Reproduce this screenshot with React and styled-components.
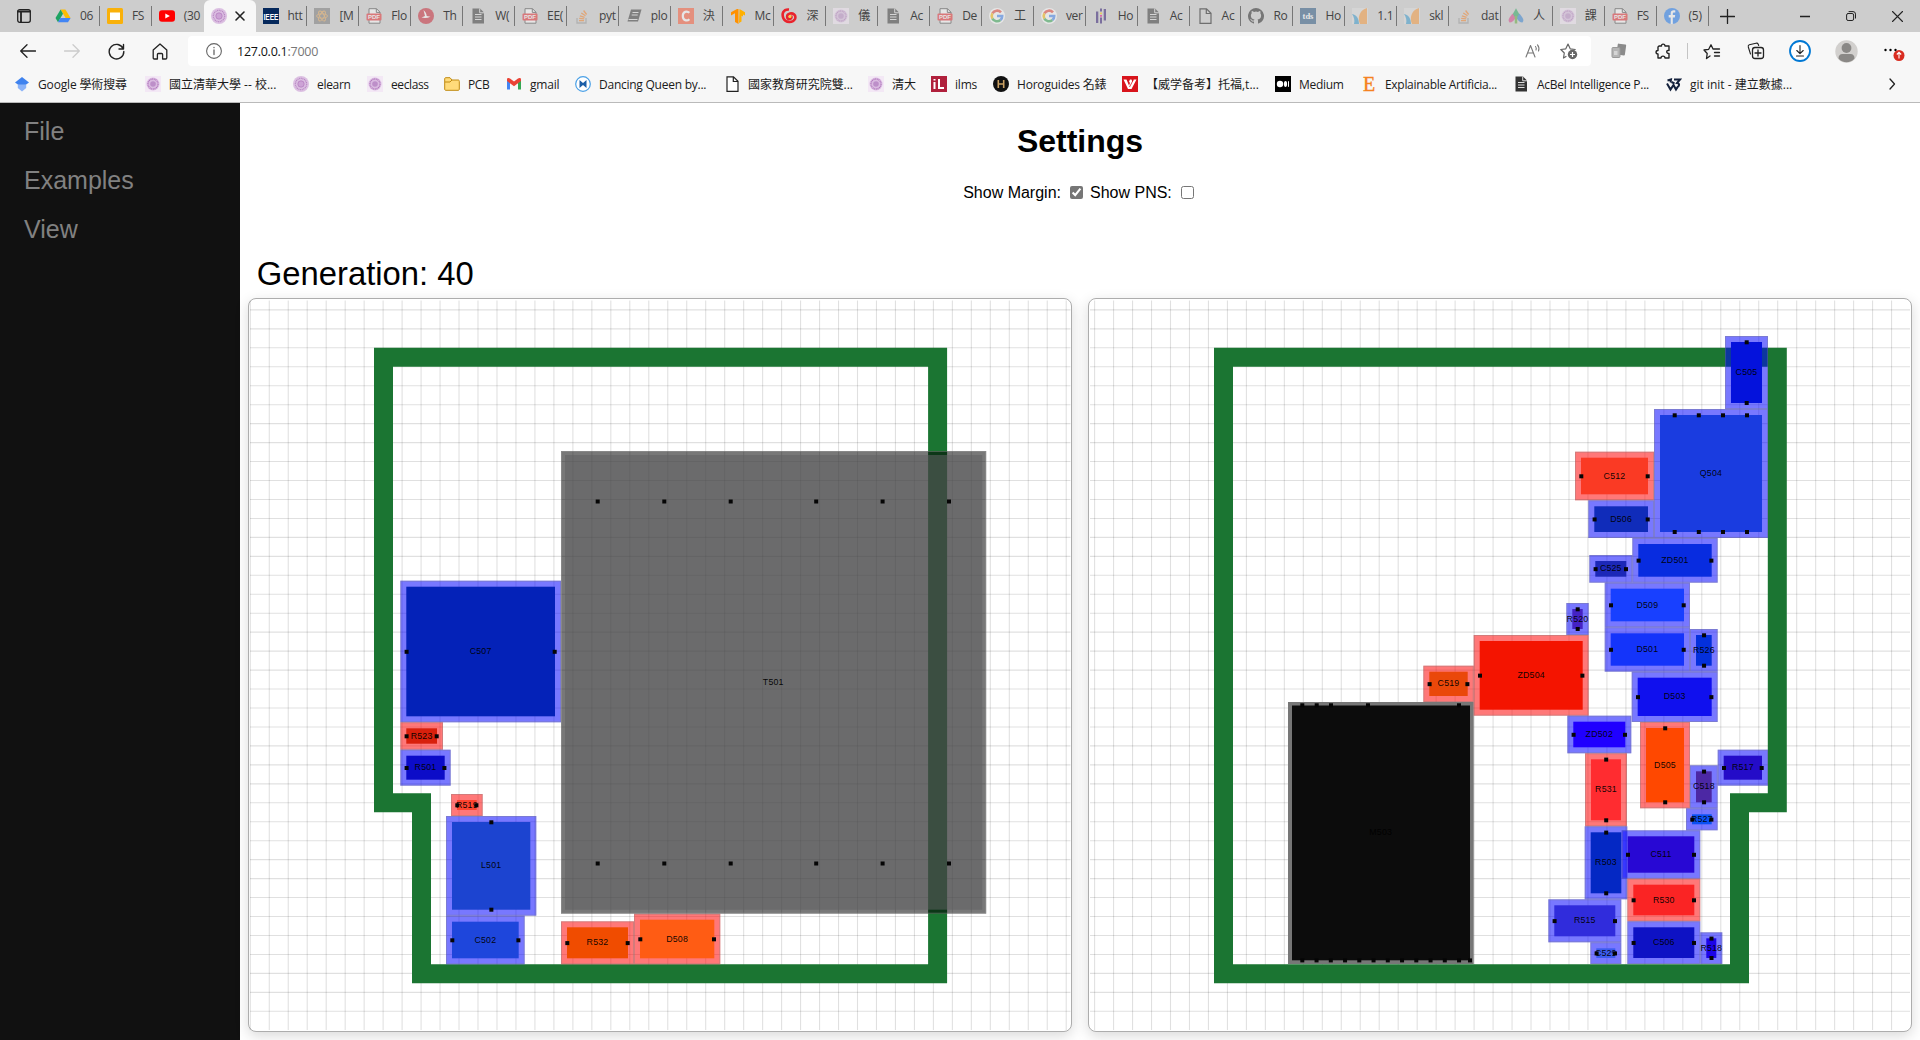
import React from "react";
import styled, { createGlobalStyle } from "styled-components";

const Global = createGlobalStyle`
  * { box-sizing: border-box; }
  body { margin: 0; background: #fff; font-family: "Liberation Sans", Arial, sans-serif; overflow: hidden; }
`;
const ui = `"Open Sans", "Noto Sans CJK TC", "Noto Sans", sans-serif`;

const Window = styled.div`
  width: 1920px;
  height: 1040px;
  display: flex;
  flex-direction: column;
  overflow: hidden;
`;
const TabStrip = styled.div`
  height: 32px;
  flex: none;
  display: flex;
  background: #cdcdcd;
  font-family: ${ui};
`;
const TabMenu = styled.div`
  width: 48px;
  display: flex;
  align-items: center;
  justify-content: center;
`;
const Tab = styled.div`
  width: 51.9px;
  height: 32px;
  flex: none;
  display: flex;
  align-items: center;
  padding-left: 7px;
  gap: ${(p) => (p.$active ? 5 : 9)}px;
  color: #444;
  font-size: 12px;
  white-space: nowrap;
  background: ${(p) =>
    p.$active ? "#f7f7f7" : p.$noLine ? "none" : "linear-gradient(#777, #777) right 6px / 1px 20px no-repeat"};
  border-radius: ${(p) => (p.$active ? "6px 6px 0 0" : "0")};
`;
const TabTitle = styled.span`
  letter-spacing: -0.3px;
  line-height: 20px;
`;
const Dim = styled.span`
  display: flex;
  opacity: ${(p) => (p.$dim ? 0.5 : 1)};
`;
const NewTab = styled.div`
  width: 38px;
  display: flex;
  align-items: center;
  justify-content: center;
`;
const Controls = styled.div`
  margin-left: auto;
  display: flex;
`;
const Control = styled.div`
  width: 46px;
  display: flex;
  align-items: center;
  justify-content: center;
`;
const Toolbar = styled.div`
  height: 38px;
  flex: none;
  display: flex;
  align-items: center;
  background: #f7f7f7;
  font-family: ${ui};
`;
const NavButton = styled.div`
  width: ${(p) => p.$w || 44}px;
  height: 30px;
  flex: none;
  display: flex;
  align-items: center;
  justify-content: center;
`;
const NavGroup = styled.div`
  width: 188px;
  padding-left: 6px;
  display: flex;
`;
const Address = styled.div`
  width: 1403px;
  height: 30px;
  padding: 0 4px 0 17px;
  display: flex;
  align-items: center;
  background: #fff;
  border-radius: 4px;
  font-size: 12.5px;
  letter-spacing: -0.25px;
`;
const Url = styled.span`
  margin-left: 14px;
  flex: 1;
  color: #111;
`;
const Port = styled.span`
  color: #777;
`;
const Divider = styled.div`
  width: 1px;
  height: 16px;
  background: #c4c4c4;
`;
const Bookmarks = styled.div`
  height: 33px;
  flex: none;
  padding: 0 0 4px 14px;
  display: flex;
  align-items: center;
  background: #f7f7f7;
  border-bottom: 1px solid #bababa;
  font-family: ${ui};
  font-size: 12px;
  color: #1b1b1b;
`;
const Bookmark = styled.div`
  width: ${(p) => p.$w}px;
  flex: none;
  display: flex;
  align-items: center;
  gap: 8px;
  white-space: nowrap;
  letter-spacing: ${(p) => p.$ls || 0}px;
`;
const Page = styled.div`
  flex: 1;
  min-height: 0;
  display: flex;
`;
const Sidebar = styled.nav`
  width: 240px;
  flex: none;
  padding-top: 8px;
  background: #111;
`;
const SideLink = styled.div`
  height: 49px;
  padding: 6px 8px 6px 24px;
  font-size: 25px;
  line-height: 29px;
  color: #818181;
`;
const Main = styled.main`
  flex: 1;
  min-width: 0;
  display: flex;
  flex-direction: column;
`;
const Title = styled.h1`
  margin: 0;
  padding-top: 20px;
  height: 79px;
  font-size: 32px;
  line-height: 37px;
  text-align: center;
`;
const Options = styled.div`
  height: 62px;
  padding-left: 4px;
  display: flex;
  justify-content: center;
  align-items: flex-start;
  font-size: 16px;
  line-height: 22px;
`;
const Check = styled.input`
  width: 13px;
  height: 13px;
  margin: 4px 7px 0 9px;
  accent-color: #767676;
`;
const Generation = styled.div`
  height: 54px;
  padding: 11px 0 0 16.8px;
  font-size: 32.8px;
  line-height: 38px;
`;
const Boards = styled.div`
  display: flex;
  gap: 16px;
  padding: 0 8px;
`;
const Card = styled.section`
  width: 824px;
  height: 734px;
  border: 1px solid #adadad;
  border-radius: 8px;
  background: #fff;
  box-shadow: 0 4px 14px rgba(0, 0, 0, 0.15);
`;
const BoardSvg = styled.svg`
  display: block;
  width: 822px;
  height: 732px;
`;
const Label = styled.text`
  font: 8.8px "Liberation Sans", Arial, sans-serif;
  letter-spacing: 0.2px;
  text-anchor: middle;
  fill: #000;
  fill-opacity: 0.95;
`;

const stroke = { fill: "none", stroke: "#222", strokeWidth: 1.3, strokeLinecap: "round", strokeLinejoin: "round" };

const glyphs = {
  drive: <><path d="M5.6 1.5h4.8L15.6 10h-5z" fill="#fbbc04" /><path d="M5.6 1.5 8 5.7 3 14.3.5 10z" fill="#1ea362" /><path d="M5.4 10h10.2L13 14.3H3z" fill="#4285f4" /></>,
  slides: <><rect width="16" height="16" rx="1.5" fill="#f9b10a" /><rect x="3" y="4.5" width="10" height="7.5" fill="#fff" /></>,
  youtube: <><rect y="2.3" width="16" height="11.5" rx="3" fill="#f00" /><path d="M6.3 5.4v5.2L10.9 8z" fill="#fff" /></>,
  seal: <><circle cx="8" cy="8" r="8" fill="#dcc0e2" /><circle cx="8" cy="8" r="5.6" fill="none" stroke="#b989c4" strokeWidth="1.3" strokeDasharray="1 .7" /><circle cx="8" cy="8" r="3.2" fill="#cda3d6" stroke="#b27abd" strokeWidth=".7" /></>,
  sealSq: <><rect width="16" height="16" fill="#f3e8f5" /><circle cx="8" cy="8" r="6.5" fill="#dabbe1" /><circle cx="8" cy="8" r="5" fill="none" stroke="#b27abd" strokeWidth="1.3" strokeDasharray="1 .7" /><circle cx="8" cy="8" r="2.8" fill="#bd8fc9" /></>,
  ieee: <><rect width="16" height="16" fill="#06295c" /><text x="8" y="11.500" textAnchor="middle" fontSize="9" fontWeight="700" fontFamily="Liberation Sans" fill="#fff" textLength="15" lengthAdjust="spacingAndGlyphs">IEEE</text></>,
  atom: <><rect width="16" height="16" fill="#777" /><g fill="none" stroke="#e0a050" strokeWidth=".9"><ellipse cx="8" cy="8" rx="5.5" ry="2.2" /><ellipse cx="8" cy="8" rx="5.5" ry="2.2" transform="rotate(60 8 8)" /><ellipse cx="8" cy="8" rx="5.5" ry="2.2" transform="rotate(120 8 8)" /></g></>,
  pdf: <><path d="M3 .7h7.5L14 4.2v11H3z" fill="#fff" stroke="#444" /><path d="M10.3.7v3.7H14" fill="none" stroke="#444" /><rect x=".5" y="5.500" width="15" height="7" rx="1" fill="#e5252a" /><text x="8" y="11.2" textAnchor="middle" fontSize="6" fontWeight="700" fontFamily="Liberation Sans" fill="#fff">PDF</text></>,
  bird: <><circle cx="8" cy="8" r="8" fill="#c8202f" /><path d="M5.5 2c2 2 3 3.5 3.2 6l3.8.8c-3 1.2-5.5 1.7-9 .8L7 8z" fill="#fff" /></>,
  doc: <><path d="M2.5.5H10l4 4v11H2.500z" fill="#333" /><path d="M5 6.500h6.500M5 9h6.500M5 11.500h6.500" stroke="#ddd" strokeWidth="1.2" /><path d="M9.7.5v4.300H14" fill="none" stroke="#ddd" /></>,
  stack: <><path d="M3 10v5h9v-5" fill="none" stroke="#999" strokeWidth="1.3" /><path d="M5 12.700h5M5.200 10.300l5 .6M5.900 7.800l4.700 1.500M7.300 5l4.200 2.700M9.600 2.500l3 4" stroke="#f48024" strokeWidth="1.3" /></>,
  book: <><path d="M5 1.500h10.500L12 13.500H1.500z" fill="#333" /><path d="M6.500 4.500h6M5.700 7h6M2.500 11.500h9" stroke="#ddd" /></>,
  c: <><rect width="16" height="16" fill="#fc5531" /><path d="M11.4 4.800C9 2.500 4.800 3.500 4.800 8s4.200 5.500 6.600 3.200" fill="none" stroke="#fff" strokeWidth="2.200" /></>,
  tf: <><path d="M7 1 1 4.300v3.200l4-2.200V14l3.500 2V1z" fill="#ff9100" /><path d="M9.500 1 15 4.300v3.200l-2-1.100v2.200l-1.500-.8v5.700L9 15z" fill="#ffb000" /></>,
  swirl: <><path d="M8 1.500C2 1 .5 6 2.500 10.500c2 4.500 9.500 4.500 11.500.500 1.500-4-2-6-5-5.500-4 1-3.500 5.500-.5 5.500 2 0 2.500-2 1.500-3" fill="none" stroke="#e9232c" strokeWidth="2.600" /><circle cx="9" cy="8.500" r="1.500" fill="#ffd040" /></>,
  google: <g fill="none" strokeWidth="2.6"><circle cx="8" cy="8" r="8" fill="#fff" stroke="none" /><path d="M12 4.400A5.300 5.300 0 0 0 3.400 5.400" stroke="#ea4335" /><path d="M3.400 5.400a5.300 5.300 0 0 0 0 5.200" stroke="#fbbc05" /><path d="M3.400 10.600a5.300 5.300 0 0 0 8 1.400" stroke="#34a853" /><path d="M11.400 12A5 5 0 0 0 13.200 8H8" stroke="#4285f4" /></g>,
  pandas: <><path d="M3 3.500h2.300V15H3zM10.700 1H13v11.500h-2.300zM7 .5h2v3H7zM7 9.500h2v6H7z" fill="#2b1471" /><path d="M7 4.500h2v1.700H7z" fill="#ffca00" /><path d="M7 7h2v1.700H7z" fill="#e70488" /></>,
  file: <path d="M3 .8h6.500L14 5.300v10H3zM9.300.8v4.700H14" fill="#fff" stroke="#222" strokeWidth="1.2" />,
  fileGrey: <path d="M3 .8h6.500L14 5.300v10H3zM9.300.8v4.700H14" fill="none" stroke="#111" strokeWidth="1.2" />,
  github: <path d="M8 0a8 8 0 0 0-2.500 15.600c.4 0 .5-.2.500-.4v-1.600c-2.200.5-2.700-1-2.700-1-.4-.9-.9-1.200-.9-1.200-.7-.5.1-.5.1-.5.8.1 1.200.8 1.200.8.7 1.200 1.900.9 2.300.7 0-.5.300-.9.500-1.100C4.700 11.100 2.900 10.400 2.900 7.400c0-.9.300-1.600.8-2.200 0-.2-.3-1 .1-2.100 0 0 .7-.2 2.200.8a7.500 7.500 0 0 1 4 0c1.500-1 2.200-.8 2.200-.8.4 1.100.2 1.900.1 2.100.5.600.8 1.300.8 2.200 0 3.100-1.900 3.700-3.600 3.900.3.300.5.800.5 1.500v2.400c0 .2.100.5.500.4A8 8 0 0 0 8 0z" fill="#222" />,
  tds: <><rect width="16" height="16" fill="#25527e" /><text x="8" y="10.5" textAnchor="middle" fontSize="8.500" fontWeight="700" fontFamily="Liberation Serif" fill="#fff">tds</text></>,
  sk: <><rect width="16" height="16" fill="#ddd" /><path d="M15 0v16H8C5 9 8 2 15 0z" fill="#f89939" /><path d="M0 6c5 1 7 5 7 10H2c1-4 0-7-2-10z" fill="#3499cd" /></>,
  triangle: <><path d="M8 .3 4.300 7 8 12l3.700-5z" fill="#25a65a" /><path d="M4.500 5.500C1 10-.5 12 1.500 14.500c2.500 0 4.500-2 6-4.500z" fill="#d83f86" /><path d="M11.500 5.500C15 10 16.500 12 14.500 14.500c-2.500 0-4.500-2-6-4.500z" fill="#2f7fd0" /><path d="M8 8v7.500" stroke="#5fa834" strokeWidth="2.500" /></>,
  facebook: <><circle cx="8" cy="8" r="8" fill="#1877f2" /><path d="M8.8 16V9.500h2l.4-2.400H8.800V5.700c0-.8.4-1.200 1.300-1.200h1.200v-2C8.500 2 6.700 2.700 6.700 5.300v1.800h-2v2.400h2V16z" fill="#fff" /></>,
  scholar: <><path d="m8 1 7 5.500-7 5-7-5z" fill="#3f82ee" /><path d="M3.800 8.500h8.400V12L8 15.500 3.800 12z" fill="#8bb3f8" /></>,
  folder: <><path d="M.7 3c0-1 .3-1.300 1.300-1.300h4L8 4h6c1 0 1.300.4 1.300 1.300V13c0 1-.3 1.300-1.300 1.300H2c-1 0-1.300-.3-1.300-1.300z" fill="#ffdb7a" stroke="#c08a10" /><path d="M1 6h5l2-2" fill="none" stroke="#c08a10" /></>,
  gmail: <><path d="M1 3.500v10h3V6z" fill="#4285f4" /><path d="M15 3.500v10h-3V6z" fill="#34a853" /><path d="M1 3.500C1 2 2.700 1.600 4 2.600l4 3 4-3c1.300-1 3-.6 3 .9V5L8 10.300 1 5z" fill="#ea4335" /></>,
  heptabase: <><circle cx="8" cy="8" r="7.3" fill="#fff" stroke="#4aa0e6" strokeWidth="1.2" /><path d="M4.500 4v8L8 9V7zM11.500 4v8L8 9V7z" fill="#1b5ea8" /></>,
  ilms: <><rect width="16" height="16" fill="#b0203c" /><path d="M3.500 6v7M3.500 3v1.500M8 3v9h5" fill="none" stroke="#fff" strokeWidth="2" /></>,
  horo: <><circle cx="8" cy="8" r="8" fill="#111" /><path d="M5.300 4v8M10.700 4v8M5.300 8h5.400" stroke="#c9a063" strokeWidth="1.6" /></>,
  vred: <><rect width="16" height="16" fill="#d8141c" /><path d="M1.500 3.500h3L7 9.500l1-2.500-1-1.500 1-2h1.500L10.500 6l1-2.500h3L9.500 13H6z" fill="#fff" /><path d="m7.500 11 4-7.500" stroke="#d8141c" strokeWidth=".8" /></>,
  medium: <><rect width="16" height="16" fill="#000" /><circle cx="5" cy="8" r="3.2" fill="#fff" /><ellipse cx="10.5" cy="8" rx="1.6" ry="3" fill="#fff" /><rect x="13" y="5.2" width="1" height="5.6" fill="#fff" /></>,
  e: <text x="8" y="14.500" textAnchor="middle" fontSize="20" fontFamily="Liberation Serif" fill="#f58220" stroke="#f58220" strokeWidth=".4">E</text>,
  git: <><path d="M1.500 4.500 5 3.500l-.5 3M8 3.500h6l-3 3.500c3 .5 2.500 3.500 0 4M1 7.500l3.500 6L7.500 9l2.500 4.500 2-3" fill="none" stroke="#14213c" strokeWidth="2" /><path d="m5.500 6 3 1.500" stroke="#14213c" strokeWidth="2" /></>,
};
const Icon = styled.svg`
  width: 16px;
  height: 16px;
  flex: none;
`;
const Glyph = ({ name }) => <Icon viewBox="0 0 16 16">{glyphs[name]}</Icon>;

const tabs = [
  ["drive", "06"], ["slides", "FS"], ["youtube", "(30"], ["active", ""], ["ieee", "htt"], ["atom", "[M", 1],
  ["pdf", "Flo", 1], ["bird", "Th", 1], ["doc", "W(", 1], ["pdf", "EE(", 1], ["stack", "pyt", 1], ["book", "plo", 1],
  ["c", "決", 1], ["tf", "Mc"], ["swirl", "深"], ["sealSq", "儀", 1], ["doc", "Ac", 1], ["pdf", "De", 1],
  ["google", "工", 1], ["google", "ver", 1], ["pandas", "Ho", 1], ["doc", "Ac", 1], ["fileGrey", "Ac", 1], ["github", "Ro", 1],
  ["tds", "Ho", 1], ["sk", "1.1", 1], ["sk", "skl", 1], ["stack", "dat", 1], ["triangle", "人", 1], ["sealSq", "課", 1],
  ["pdf", "FS", 1], ["facebook", "(5)", 1],
];

const bookmarks = [
  ["scholar", "Google 學術搜尋", 131, -0.15], ["sealSq", "國立清華大學 -- 校...", 148, 0], ["seal", "elearn", 74, -0.3],
  ["sealSq", "eeclass", 77, -0.4], ["folder", "PCB", 62, -0.4], ["gmail", "gmail", 69, -0.2], ["heptabase", "Dancing Queen by...", 149, -0.25],
  ["file", "國家教育研究院雙...", 144, -0.05], ["sealSq", "清大", 63], ["ilms", "ilms", 62, -0.2], ["horo", "Horoguides 名錶", 129, -0.2],
  ["vred", "【威学备考】托福,t...", 153, 0], ["medium", "Medium", 86, -0.3], ["e", "Explainable Artificia...", 152, -0.3],
  ["doc", "AcBel Intelligence P...", 153, -0.25], ["git", "git init - 建立數據...", 221, 0],
];

/* name, left, top, right, bottom, body colour, pin axis, margin colour */
const B = "rgba(0,0,255,.53)";
const R = "rgba(255,0,0,.53)";
const leftParts = [
  ["C507", 400.3, 580.7, 561, 722.3, "#0422b8", "h", B],
  ["R523", 400.3, 722.3, 443, 749.7, "#d8200c", "h", R],
  ["R501", 400.3, 749.7, 450.7, 785.7, "#0c0cc8", "h", B],
  ["R519", 451, 794, 482.7, 816, "#ff4430", "h", R],
  ["L501", 446, 816, 536.3, 915.7, "#1c44d0", "v", B],
  ["C502", 446, 915.7, 524.7, 964.3, "#1e46dc", "h", B],
  ["R532", 561, 921.3, 634, 964.3, "#f04c00", "h", R],
  ["D508", 634, 913.7, 720.3, 964.3, "#ff5c14", "h", R],
];
const rightParts = [
  ["C505", 1725, 336, 1768, 409, "#0412dc", "v", B],
  ["Q504", 1654, 409, 1768, 538, "#1a3ce0", "q", B],
  ["C512", 1575, 451.7, 1654, 500.3, "#fa3a24", "h", R],
  ["D506", 1588.3, 500.3, 1654, 538, "#102cba", "h", B],
  ["ZD501", 1632.3, 538, 1717.7, 582.7, "#082ce0", "h", B],
  ["C525", 1589.3, 555, 1632.3, 582.7, "#1c28b8", "h", B],
  ["D509", 1604.7, 582.7, 1690, 627.3, "#1840ff", "h", B],
  ["R520", 1566.3, 603, 1588.7, 635, "#4422c4", "v", B],
  ["D501", 1604.7, 627.3, 1690, 671.7, "#1434fa", "h", B],
  ["R526", 1690, 629, 1717.7, 671.7, "#0430dc", "v", B],
  ["ZD504", 1473.7, 635, 1588.7, 715.7, "#f41400", "h", R],
  ["C519", 1423.3, 665.7, 1473.7, 702, "#ea480a", "h", R],
  ["D503", 1631.7, 671.7, 1717.7, 722, "#1010ee", "h", B],
  ["ZD502", 1567.3, 715.7, 1631.3, 753.3, "#2000ff", "h", B],
  ["D505", 1640, 722, 1690, 808.3, "#ff4800", "v", R],
  ["R531", 1585, 753.3, 1627, 826.3, "#ff2c30", "v", R],
  ["R517", 1717.7, 749.7, 1768, 785.7, "#240cc8", "h", B],
  ["C518", 1690, 765.3, 1717.7, 808.3, "#4c28a4", "v", B],
  ["R527", 1686, 808.3, 1717.7, 830.3, "#0a50f4", "h", B],
  ["R503", 1584.7, 826.3, 1627.3, 899.3, "#0428c4", "v", B],
  ["C511", 1621.7, 830.3, 1700.3, 878.7, "#2808d4", "h", B],
  ["R530", 1627.3, 878.7, 1700.3, 921.3, "#fa2424", "h", R],
  ["R515", 1548.3, 899.3, 1621.3, 942.3, "#302cdc", "h", B],
  ["C529", 1590.3, 942.3, 1621.3, 964, "#3c5cf0", "h", B],
  ["C506", 1627.3, 921.3, 1700.3, 964, "#0e12c4", "h", B],
  ["R518", 1700.3, 932.3, 1722.3, 964, "#1c04e8", "v", B],
];

const Pin = ({ x, y }) => <rect x={x - 2} y={y - 2} width="4" height="4" fill="#050505" />;

function Part({ d }) {
  const [name, x0, y0, x1, y1, color, axis, margin] = d;
  const m = 6;
  const cx = (x0 + x1) / 2;
  const cy = (y0 + y1) / 2;
  const pins =
    axis === "h"
      ? [[x0 + m + 0.3, cy + 0.3], [x1 - m - 0.3, cy + 0.3]]
      : axis === "v"
      ? [[cx + 0.2, y0 + m + 0.3], [cx + 0.2, y1 - m]]
      : [1674.7, 1698.8, 1723, 1747].flatMap((x) => [[x, y0 + m + 0.3], [x, y1 - m]]);
  return (
    <g>
      <rect x={x0} y={y0} width={x1 - x0} height={y1 - y0} fill={margin} />
      <rect x={x0 + 0.5} y={y0 + 0.5} width={x1 - x0 - 1} height={y1 - y0 - 1} fill="none" stroke="rgba(128,128,128,.35)" />
      <rect x={x0 + m} y={y0 + m} width={x1 - x0 - 2 * m} height={y1 - y0 - 2 * m} fill={color} />
      {pins.map(([x, y], i) => <Pin key={i} x={x} y={y} />)}
      <Label x={cx} y={cy + 2.5}>{name}</Label>
    </g>
  );
}

function Grid({ x0, x1, first }) {
  const v = [];
  for (let x = first; x < x1; x += 18.975) v.push(x);
  const h = [];
  for (let y = 309.9; y < 1030; y += 18.957) h.push(y);
  return (
    <g stroke="#000" strokeOpacity=".12" strokeWidth="1.1">
      {v.map((x) => <line key={x} x1={x} x2={x} y1="300.5" y2="1030" />)}
      {h.map((y) => <line key={y} y1={y} y2={y} x1={x0} x2={x1} />)}
    </g>
  );
}

const LeftBoard = () => (
  <BoardSvg viewBox="249 299 822 732">
    <Grid x0={250} x1={1070.5} first={250.3} />
    <path d="M383.5 357.3H937.6V973.7H421.5V802.8H383.5Z" fill="none" stroke="#1b7532" strokeWidth="19" />
    {leftParts.map((d) => <Part key={d[0]} d={d} />)}
    <rect x="561" y="451" width="425.2" height="462.7" fill="rgba(0,0,0,.53)" />
    <rect x="561.5" y="451.5" width="424.2" height="461.7" fill="none" stroke="rgba(160,160,160,.4)" />
    <rect x="565" y="455" width="417.2" height="454.7" fill="rgba(97,97,98,.557)" />
    {[597.7, 664.3, 730.7, 816.2, 882.6, 949].flatMap((x) => [
      <Pin key={x + "t"} x={x} y={501.5} />,
      <Pin key={x + "b"} x={x} y={863.5} />,
    ])}
    <Label x="773.3" y="685">T501</Label>
  </BoardSvg>
);

const RightBoard = () => (
  <BoardSvg viewBox="1089 299 822 732">
    <Grid x0={1090} x1={1910} first={1094.6} />
    <path d="M1223.5 357.3H1777.3V802.8H1739.5V973.7H1223.5Z" fill="none" stroke="#1b7532" strokeWidth="19" />
    <rect x="1288" y="702" width="185.7" height="262" fill="#777" />
    <rect x="1292" y="705.5" width="178" height="254.8" fill="#0c0c0c" />
    {[1302.3, 1316.7, 1331, 1368, 1459].map((x) => <Pin key={x} x={x} y={705.3} />)}
    {[0, 1, 2, 3, 4, 5, 6, 7, 8, 9, 10, 11].map((k) => <Pin key={k} x={1302.3 + k * 14.25} y={960.4} />)}
    <Pin x={1470} y={960.4} />
    <Label x="1380.7" y="834.5">M503</Label>
    {rightParts.map((d) => <Part key={d[0]} d={d} />)}
  </BoardSvg>
);

export default function App() {
  return (
    <Window>
      <Global />
      <TabStrip>
        <TabMenu>
          <svg width="14" height="14" viewBox="0 0 14 14"><rect x=".7" y=".7" width="12.6" height="12.6" rx="2" {...stroke} /><path d="M1 2.5h12M4 3v10" {...stroke} strokeWidth="1.8" /></svg>
        </TabMenu>
        {tabs.map(([icon, text, dim], i) =>
          icon === "active" ? (
            <Tab key={i} $active>
              <Glyph name="seal" />
              <svg width="16" height="16" viewBox="0 0 16 16"><path d="m4 4 8 8m0-8-8 8" {...stroke} strokeWidth="1.6" /></svg>
            </Tab>
          ) : (
            <Tab key={i} $noLine={i === 2}>
              <Dim $dim={dim}><Glyph name={icon} /></Dim>
              <TabTitle>{text}</TabTitle>
            </Tab>
          )
        )}
        <NewTab><svg width="15" height="15" viewBox="0 0 15 15"><path d="M7.5.5v14M.5 7.5h14" {...stroke} /></svg></NewTab>
        <Controls>
          <Control><svg width="10" height="10"><path d="M0 5.5h10" {...stroke} /></svg></Control>
          <Control><svg width="10" height="10" viewBox="0 0 10 10"><rect x=".6" y="2.5" width="7" height="7" rx="1.5" {...stroke} strokeWidth="1" /><path d="M3 .6h4q2.500 0 2.500 2.500v4" {...stroke} strokeWidth="1" /></svg></Control>
          <Control><svg width="11" height="11" viewBox="0 0 11 11"><path d="m.5.5 10 10m0-10-10 10" {...stroke} strokeWidth="1.1" /></svg></Control>
        </Controls>
      </TabStrip>
      <Toolbar>
        <NavGroup>
          <NavButton><svg width="16" height="14" viewBox="0 0 16 14"><path d="M15.5 7H.7M7 .7.7 7 7 13.3" {...stroke} /></svg></NavButton>
          <NavButton><svg width="16" height="14" viewBox="0 0 16 14"><path d="M.5 7h14.800M9 .7 15.300 7 9 13.300" {...stroke} stroke="#ccc" /></svg></NavButton>
          <NavButton><svg width="17" height="17" viewBox="0 0 17 17"><path d="M15.3 6A7.300 7.300 0 1 0 15.800 8.500M15.500 1.500V6H11" {...stroke} strokeWidth="1.4" /></svg></NavButton>
          <NavButton><svg width="16" height="17" viewBox="0 0 16 17"><path d="M1.200 7 8 1l6.800 6v7.800q0 1.200-1.200 1.200h-3v-4.500q0-1-1-1H6.400q-1 0-1 1V16h-3q-1.200 0-1.200-1.200z" {...stroke} strokeWidth="1.3" /></svg></NavButton>
        </NavGroup>
        <Address>
          <svg width="18" height="18" viewBox="0 0 18 18"><circle cx="9" cy="9" r="7.4" {...stroke} stroke="#666" strokeWidth="1.1" /><path d="M9 8v4.500M9 5.300v.4" {...stroke} stroke="#666" /></svg>
          <Url>127.0.0.1<Port>:7000</Port></Url>
          <NavButton $w={36}><svg width="16" height="16" viewBox="0 0 16 16"><path d="m1 14 4.500-11.500L10 14M2.700 10h5.600M10.500 3.500q1.300 1.500.5 3.500M12.500 1.800q2.300 2.700 1 6.200" {...stroke} stroke="#777" strokeWidth="1.1" /></svg></NavButton>
          <NavButton $w={36}><svg width="18" height="18" viewBox="0 0 18 18"><path d="M6 14.500 3.500 16l.8-5L.8 7.500l5-.7L8 2l2.200 4.800 5 .7" {...stroke} stroke="#666" strokeWidth="1.2" /><circle cx="12.5" cy="12.5" r="4.7" fill="#666" /><path d="M12.5 10v5M10 12.500h5" stroke="#fff" strokeWidth="1.2" /></svg></NavButton>
        </Address>
        <NavButton $w={56}><svg width="16" height="16" viewBox="0 0 16 16"><rect x="6" y="1" width="8.500" height="11" rx="1" fill="#8b8b8b" transform="rotate(8 10 7)" /><rect x="1" y="4.5" width="8" height="10" rx="1" fill="#b5b5b5" stroke="#999" /><rect x="3" y="8" width="3.500" height="4" fill="#d5d5d5" /></svg></NavButton>
        <NavButton $w={32}><svg width="17" height="17" viewBox="0 0 17 17"><path d="M4 3h2.500C6 .7 10 .2 10 3h4v4.500c-3-1-3 3.500 0 3V15h-4c0-2.500-4-2.500-4 0H3v-4C.4 11 .4 7.500 3 7.500V4z" {...stroke} strokeWidth="1.4" /></svg></NavButton>
        <NavButton $w={17}><Divider /></NavButton>
        <NavButton $w={32}><svg width="18" height="17" viewBox="0 0 18 17"><path d="m7 13-3.500 2.500.7-5L1 7l4.700-.7L8 1.800 10 6h6.500M11.500 9.500h5M11.500 13h5" {...stroke} /></svg></NavButton>
        <NavButton $w={56}><svg width="18" height="18" viewBox="0 0 18 18"><path d="M3.5 12 1.300 5q-.4-1.700 1-2.200L9 1.200q1.600-.4 2.200 1l.5 1.300" {...stroke} strokeWidth="1.1" /><rect x="5.5" y="5.5" width="11" height="11" rx="2.5" {...stroke} /><path d="M11 8v6M8 11h6" {...stroke} /></svg></NavButton>
        <NavButton $w={32}><svg width="22" height="22" viewBox="0 0 22 22"><circle cx="11" cy="11" r="10" fill="#fff" stroke="#0078d4" strokeWidth="1.8" /><path d="M11 5.500v8M7.800 10.500l3.200 3.200 3.200-3.200M7.500 16h7" {...stroke} strokeWidth="1.1" /></svg></NavButton>
        <NavButton $w={60}><svg width="23" height="23" viewBox="0 0 23 23"><circle cx="11.5" cy="11.5" r="11.2" fill="#d2d0ce" /><circle cx="11.5" cy="8" r="4.9" fill="#8a8886" /><path d="M3.5 18.500q0-4.500 4-4.500h8q4 0 4 4.500c-4 5-12 5-16 0z" fill="#8a8886" /></svg></NavButton>
        <NavButton $w={34}><svg width="24" height="24" viewBox="0 0 24 24"><circle cx="4.5" cy="11" r="1.2" /><circle cx="9.5" cy="11" r="1.2" /><circle cx="14.5" cy="11" r="1.2" /><circle cx="18" cy="16.5" r="5.5" fill="#d92c20" /><path d="M18 19.500v-6M15.800 15.500l2.200-2.200 2.200 2.200" fill="none" stroke="#fff" strokeWidth="1.1" /></svg></NavButton>
      </Toolbar>
      <Bookmarks>
        {bookmarks.map(([icon, text, w, ls]) => (
          <Bookmark key={text} $w={w} $ls={ls}><Glyph name={icon} />{text}</Bookmark>
        ))}
        <svg width="10" height="14" viewBox="0 0 10 14"><path d="m3 2 4.500 5L3 12" {...stroke} /></svg>
      </Bookmarks>
      <Page>
        <Sidebar>
          <SideLink>File</SideLink>
          <SideLink>Examples</SideLink>
          <SideLink>View</SideLink>
        </Sidebar>
        <Main>
          <Title>Settings</Title>
          <Options>
            <span>Show Margin:</span><Check type="checkbox" defaultChecked />
            <span>Show PNS:</span><Check type="checkbox" />
          </Options>
          <Generation>Generation: 40</Generation>
          <Boards>
            <Card><LeftBoard /></Card>
            <Card><RightBoard /></Card>
          </Boards>
        </Main>
      </Page>
    </Window>
  );
}
